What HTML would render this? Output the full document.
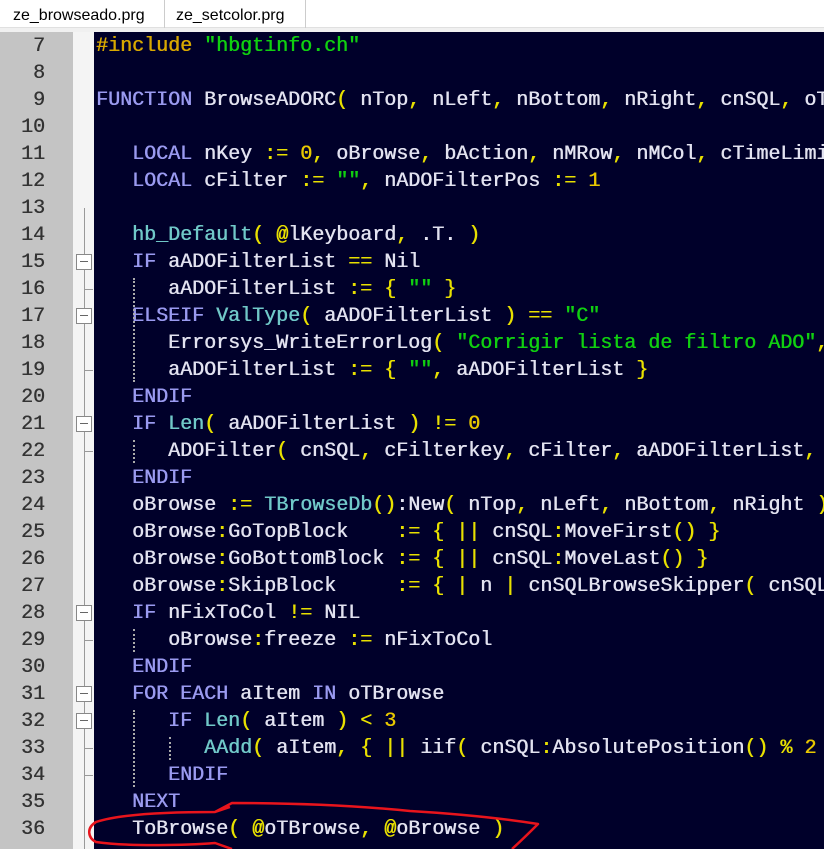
<!DOCTYPE html>
<html><head><meta charset="utf-8"><style>
*{margin:0;padding:0;box-sizing:border-box}
html,body{width:824px;height:849px;overflow:hidden}
body{background:#f0f0f0;position:relative;font-family:"Liberation Sans",sans-serif}
#wrap{position:absolute;left:0;top:0;width:824px;height:849px;overflow:hidden}
#tabs{position:absolute;left:0;top:0;width:824px;height:28px;background:#fff;border-bottom:1px solid #e0e0e0}
.tab{position:absolute;top:0;height:28px;font-size:16px;line-height:32px;color:#000}
#gut{position:absolute;left:0;top:32px;width:73px;height:817px;background:#c4c4c4}
#fold{position:absolute;left:73px;top:32px;width:21px;height:817px;background:#f4f4f4}
#ed{position:absolute;left:94px;top:32px;width:730px;height:817px;background:#00002a;overflow:hidden}
.ln{position:absolute;left:0;width:45px;text-align:right;font-family:"Liberation Mono",monospace;font-size:20px;color:#333;line-height:27px;text-shadow:0.4px 0 0 #333}
.cl{position:absolute;left:2px;font-family:"Liberation Mono",monospace;font-size:20px;line-height:27px;white-space:pre;color:#e2e2f0;text-shadow:0.5px 0 0 currentColor}
.cl span{text-shadow:0.5px 0 0 currentColor}
.k{color:#9a9af0}.f{color:#70c8c8}.o{color:#e8e000}.s{color:#10d010}.n{color:#e8c800}.p{color:#d8a800}
.box{position:absolute;left:76px;width:16px;height:16px;border:1px solid #888;background:#fff}
.box:after{content:"";position:absolute;left:3px;top:6px;width:8px;height:1px;background:#666}
.tick{position:absolute;left:84px;width:9px;height:1px;background:#999}
.g{position:absolute;width:0;border-left:2px dotted #aaa}
</style></head><body><div id="wrap">
<div id="tabs">
<div class="tab" style="left:0;width:164px;padding-left:13px">ze_browseado.prg</div>
<div style="position:absolute;left:164px;top:0;width:1px;height:28px;background:#ccc"></div>
<div class="tab" style="left:165px;width:140px;padding-left:11px">ze_setcolor.prg</div>
<div style="position:absolute;left:305px;top:0;width:1px;height:28px;background:#ccc"></div>
</div>
<div id="gut"></div><div id="fold"></div><div id="ed"></div>
<div style="position:absolute;left:84px;top:208px;width:1px;height:641px;background:#999"></div>
<div id="L"></div>
<svg width="824" height="849" style="position:absolute;left:0;top:0">
<path d="M230,807 L215,812 C170,812 120,814 96,822 C86,828 88,838 96,842 C130,847 190,845 215,843 L232,849 M215,812 L232,803 C300,803 360,806 410,811 C460,814 500,818 538,824 C530,832 522,840 512,849" fill="none" stroke="#e8141c" stroke-width="2.5" stroke-linejoin="round"/>
</svg>
</div>
<script>
var lines=[
'<span class="p">#include</span> <span class="s">"hbgtinfo.ch"</span>',
'',
'<span class="k">FUNCTION</span> BrowseADORC<span class="o">(</span> nTop<span class="o">,</span> nLeft<span class="o">,</span> nBottom<span class="o">,</span> nRight<span class="o">,</span> cnSQL<span class="o">,</span> oTBrowse',
'',
'   <span class="k">LOCAL</span> nKey <span class="o">:=</span> <span class="n">0</span><span class="o">,</span> oBrowse<span class="o">,</span> bAction<span class="o">,</span> nMRow<span class="o">,</span> nMCol<span class="o">,</span> cTimeLimit',
'   <span class="k">LOCAL</span> cFilter <span class="o">:=</span> <span class="s">""</span><span class="o">,</span> nADOFilterPos <span class="o">:=</span> <span class="n">1</span>',
'',
'   <span class="f">hb_Default</span><span class="o">(</span> <span class="o">@</span>lKeyboard<span class="o">,</span> .T. <span class="o">)</span>',
'   <span class="k">IF</span> aADOFilterList <span class="o">==</span> Nil',
'      aADOFilterList <span class="o">:=</span> <span class="o">{</span> <span class="s">""</span> <span class="o">}</span>',
'   <span class="k">ELSEIF</span> <span class="f">ValType</span><span class="o">(</span> aADOFilterList <span class="o">)</span> <span class="o">==</span> <span class="s">"C"</span>',
'      Errorsys_WriteErrorLog<span class="o">(</span> <span class="s">"Corrigir lista de filtro ADO"</span><span class="o">,</span>',
'      aADOFilterList <span class="o">:=</span> <span class="o">{</span> <span class="s">""</span><span class="o">,</span> aADOFilterList <span class="o">}</span>',
'   <span class="k">ENDIF</span>',
'   <span class="k">IF</span> <span class="f">Len</span><span class="o">(</span> aADOFilterList <span class="o">)</span> <span class="o">!=</span> <span class="n">0</span>',
'      ADOFilter<span class="o">(</span> cnSQL<span class="o">,</span> cFilterkey<span class="o">,</span> cFilter<span class="o">,</span> aADOFilterList<span class="o">,</span>',
'   <span class="k">ENDIF</span>',
'   oBrowse <span class="o">:=</span> <span class="f">TBrowseDb</span><span class="o">()</span>:New<span class="o">(</span> nTop<span class="o">,</span> nLeft<span class="o">,</span> nBottom<span class="o">,</span> nRight <span class="o">)</span>',
'   oBrowse<span class="o">:</span>GoTopBlock    <span class="o">:=</span> <span class="o">{</span> <span class="o">||</span> cnSQL<span class="o">:</span>MoveFirst<span class="o">()</span> <span class="o">}</span>',
'   oBrowse<span class="o">:</span>GoBottomBlock <span class="o">:=</span> <span class="o">{</span> <span class="o">||</span> cnSQL<span class="o">:</span>MoveLast<span class="o">()</span> <span class="o">}</span>',
'   oBrowse<span class="o">:</span>SkipBlock     <span class="o">:=</span> <span class="o">{</span> <span class="o">|</span> n <span class="o">|</span> cnSQLBrowseSkipper<span class="o">(</span> cnSQL',
'   <span class="k">IF</span> nFixToCol <span class="o">!=</span> NIL',
'      oBrowse<span class="o">:</span>freeze <span class="o">:=</span> nFixToCol',
'   <span class="k">ENDIF</span>',
'   <span class="k">FOR EACH</span> aItem <span class="k">IN</span> oTBrowse',
'      <span class="k">IF</span> <span class="f">Len</span><span class="o">(</span> aItem <span class="o">)</span> <span class="o">&lt;</span> <span class="n">3</span>',
'         <span class="f">AAdd</span><span class="o">(</span> aItem<span class="o">,</span> <span class="o">{</span> <span class="o">||</span> iif<span class="o">(</span> cnSQL<span class="o">:</span>AbsolutePosition<span class="o">()</span> <span class="o">%</span> <span class="n">2</span>',
'      <span class="k">ENDIF</span>',
'   <span class="k">NEXT</span>',
'   ToBrowse<span class="o">(</span> <span class="o">@</span>oTBrowse<span class="o">,</span> <span class="o">@</span>oBrowse <span class="o">)</span>'
];
var h='',c='';
for(var i=0;i<lines.length;i++){var y=1+i*27;
h+='<div class="ln" style="top:'+(y+32)+'px">'+(i+7)+'</div>';c+='<div class="cl" style="top:'+y+'px">'+lines[i]+'</div>';}
[15,17,21,28,31,32].forEach(function(n){h+='<div class="box" style="top:'+(33+(n-7)*27+5)+'px"></div>';});
[16,19,22,29,33,34].forEach(function(n){h+='<div class="tick" style="top:'+(33+(n-7)*27+13)+'px"></div>';});
[[133,16,19],[133,22,22],[133,29,29],[133,32,34],[169,33,33]].forEach(function(g){h+='<div class="g" style="left:'+g[0]+'px;top:'+(33+(g[1]-7)*27+2)+'px;height:'+((g[2]-g[1]+1)*27-4)+'px"></div>';});
document.getElementById('L').innerHTML=h;
document.getElementById('ed').innerHTML=c;
</script>
</body></html>
